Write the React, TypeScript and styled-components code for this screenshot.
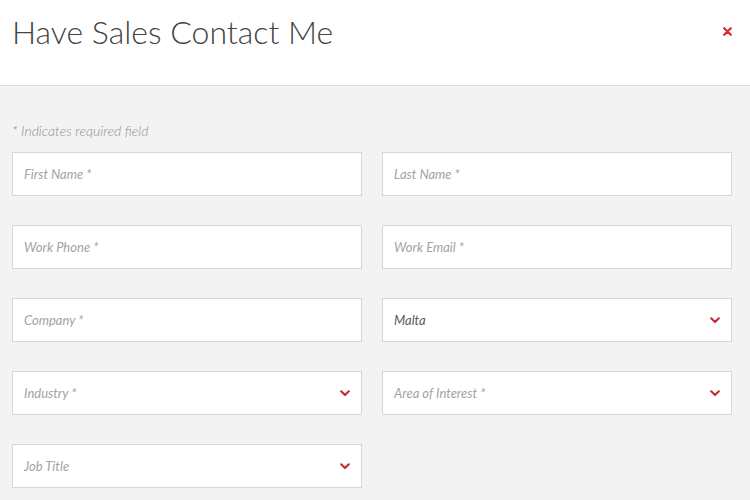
import React from "react";
import styled, { createGlobalStyle } from "styled-components";

const Global = createGlobalStyle`
  html, body { margin: 0; padding: 0; background: #f3f3f3; }
  body { font-family: Lato, "Open Sans", sans-serif; }
  * { box-sizing: border-box; }
`;

const Page = styled.div`
  width: 750px;
  height: 500px;
  overflow: hidden;
  background: #f3f3f3;
`;

const Header = styled.header`
  height: 86px;
  background: #ffffff;
  border-bottom: 1px solid #dcdcdc;
  display: flex;
  align-items: flex-start;
  justify-content: space-between;
  padding: 12px 17px 0 12px;
`;

const Title = styled.h1`
  margin: 0;
  font-family: Lato, "Open Sans", sans-serif;
  font-weight: 300;
  font-size: 32px;
  line-height: 40px;
  color: #444444;
  letter-spacing: 0;
`;

const Close = styled.button`
  border: none;
  background: transparent;
  padding: 0;
  margin-top: 13px;
  width: 12px;
  height: 12px;
  display: flex;
  align-items: center;
  justify-content: center;
  cursor: pointer;
`;

const Body = styled.div`
  padding: 36px 18px 0 12px;
`;

const Note = styled.p`
  margin: 0 0 12px 0;
  font-style: italic;
  font-weight: 300;
  font-size: 14px;
  line-height: 18px;
  color: #8f8f8f;
`;

const Grid = styled.div`
  display: grid;
  grid-template-columns: 350px 350px;
  column-gap: 20px;
  row-gap: 29px;
`;

const Field = styled.div`
  height: 44px;
  background: #ffffff;
  border: 1px solid #d6d6d6;
  display: flex;
  align-items: center;
  justify-content: space-between;
  padding: 0 11px 0 11px;
`;

const Label = styled.span<{ $filled?: boolean }>`
  font-style: italic;
  font-size: 13px;
  color: ${(p) => (p.$filled ? "#5a5a5a" : "#a3a3a3")};
`;

const Chevron = () => (
  <svg width="10" height="7" viewBox="0 0 10 7" aria-hidden>
    <path d="M1.2 1.3 L5 5 L8.8 1.3" fill="none" stroke="#c4303a" strokeWidth="2.2" strokeLinecap="round" strokeLinejoin="round" />
  </svg>
);

type F = { label: string; select?: boolean; filled?: boolean };

const fields: F[] = [
  { label: "First Name *" },
  { label: "Last Name *" },
  { label: "Work Phone *" },
  { label: "Work Email *" },
  { label: "Company *" },
  { label: "Malta", select: true, filled: true },
  { label: "Industry *", select: true },
  { label: "Area of Interest *", select: true },
  { label: "Job Title", select: true },
];

export default function App() {
  return (
    <Page>
      <Global />
      <Header>
        <Title>Have Sales Contact Me</Title>
        <Close aria-label="Close">
          <svg width="9" height="9" viewBox="0 0 9 9">
            <path d="M1.2 1.2 L7.8 7.8 M7.8 1.2 L1.2 7.8" stroke="#d9262e" strokeWidth="2.2" strokeLinecap="round" />
          </svg>
        </Close>
      </Header>
      <Body>
        <Note>* Indicates required field</Note>
        <Grid>
          {fields.map((f, i) => (
            <Field key={i}>
              <Label $filled={f.filled}>{f.label}</Label>
              {f.select && <Chevron />}
            </Field>
          ))}
        </Grid>
      </Body>
    </Page>
  );
}
